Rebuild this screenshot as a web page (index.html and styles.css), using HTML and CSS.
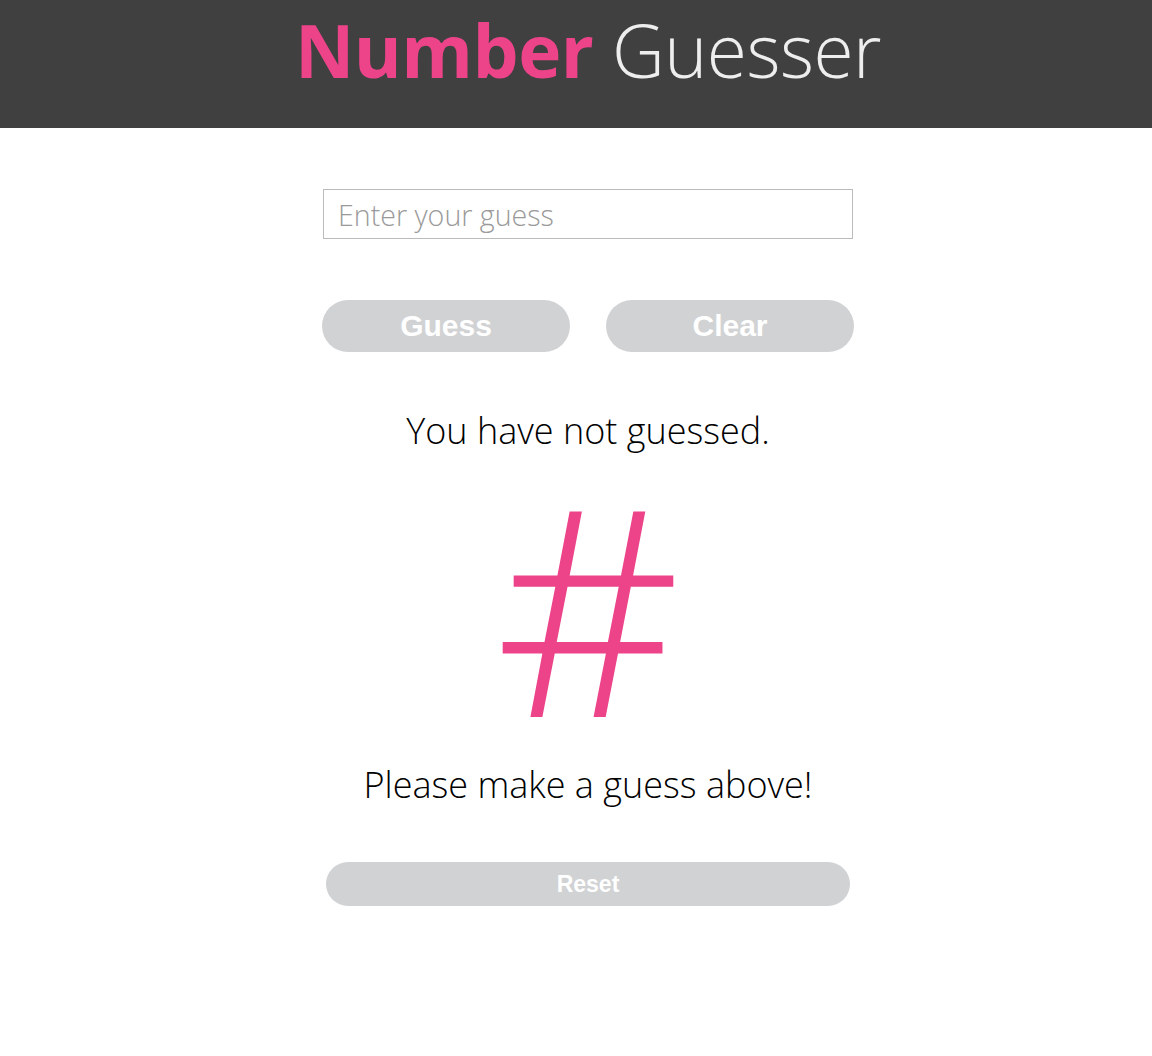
FILE: index.html
```html
<!DOCTYPE html>
<html lang="en">
<head>
<meta charset="utf-8">
<title>Number Guesser</title>
<link rel="stylesheet" href="styles.css">
</head>
<body>
<header class="top-bar">
  <h1 class="title"><span class="title-strong">Number</span> <span class="title-light">Guesser</span></h1>
</header>
<main class="game">
  <input class="guess-input" type="text" placeholder="Enter your guess">
  <div class="button-row">
    <button class="pill-btn">Guess</button>
    <button class="pill-btn">Clear</button>
  </div>
  <p class="status">You have not guessed.</p>
  <div class="big-number">#</div>
  <p class="message">Please make a guess above!</p>
  <button class="reset-btn">Reset</button>
</main>
</body>
</html>
```
FILE: styles.css
```css
html, body {
  margin: 0;
  padding: 0;
  background: #ffffff;
}
body {
  font-family: "Open Sans", "Noto Sans", sans-serif;
}
.top-bar {
  background: #404040;
  height: 128px;
  box-sizing: border-box;
  display: flex;
  align-items: flex-start;
  justify-content: center;
  padding: 13px 0 0 24px;
}
.title {
  margin: 0;
  font-size: 73px;
  line-height: 1;
  font-weight: 400;
  letter-spacing: -0.5px;
}
.title-strong {
  color: #ec4389;
  font-weight: 700;
}
.title-light {
  color: #eeeeee;
  font-weight: 300;
}
.game {
  display: flex;
  flex-direction: column;
  align-items: center;
  padding-left: 24px;
  padding-top: 61px;
}
.guess-input {
  box-sizing: border-box;
  width: 530px;
  height: 50px;
  border: 1px solid #bbbbbb;
  padding: 0 14px;
  font-family: "Open Sans", sans-serif;
  font-weight: 300;
  font-size: 28.6px;
  color: #333;
  outline: none;
}
.guess-input::placeholder {
  color: #9a9a9a;
}
.button-row {
  display: flex;
  gap: 36px;
  margin-top: 61px;
}
.pill-btn {
  width: 248px;
  height: 52px;
  border: none;
  border-radius: 26px;
  background: #d1d2d4;
  color: #ffffff;
  font-family: "Liberation Sans", Arial, sans-serif;
  font-weight: 700;
  font-size: 30px;
  padding: 0;
}
.status {
  margin: 52px 0 0;
  font-size: 36px;
  font-weight: 300;
  line-height: 54px;
  color: #000;
}
.big-number {
  margin-top: 17px;
  font-size: 288px;
  font-weight: 300;
  line-height: 260px;
  color: #ec4389;
}
.message {
  margin: 23px 0 0;
  font-size: 36px;
  font-weight: 300;
  line-height: 54px;
  color: #000;
}
.reset-btn {
  margin-top: 50px;
  width: 524px;
  height: 44px;
  border: none;
  border-radius: 22px;
  background: #d1d2d4;
  color: #ffffff;
  font-family: "Liberation Sans", Arial, sans-serif;
  font-weight: 700;
  font-size: 23px;
  padding: 0;
}
```
